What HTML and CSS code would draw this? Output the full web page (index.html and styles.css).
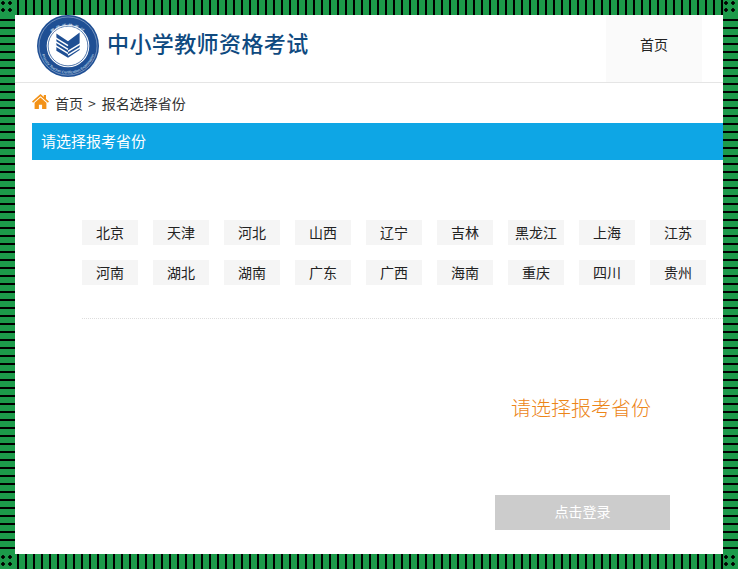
FILE: index.html
```html
<!DOCTYPE html>
<html lang="zh-CN">
<head>
<meta charset="utf-8">
<title>中小学教师资格考试</title>
<link rel="stylesheet" href="styles.css">
</head>
<body>
<div class="frame">
  <div class="corner"></div><div class="edge-h"></div><div class="corner"></div>
  <div class="edge-v"></div>
  <main class="page">
    <header class="header">
      <div class="brand">
        <svg class="logo" width="62" height="62" viewBox="0 0 64 64" aria-hidden="true">
          <circle cx="32" cy="32" r="32" fill="#1f4f94"/>
          <circle cx="32" cy="32" r="30" fill="none" stroke="#c9d6e8" stroke-width=".5"/>
          <circle cx="32" cy="32" r="22" fill="#fff"/>
          <circle cx="32" cy="32" r="20.500" fill="none" stroke="#1f4f94" stroke-width=".8"/>
          <path d="M20 19L32 27 44 18V36L32 44 20 37Z" fill="#1f4f94"/>
          <path d="M19 23.500L32 31.500M19 27.500L32 35.500M19 31.500L32 39.500M45 29.500L32 37.500M45 33.500L32 41.500" fill="none" stroke="#fff" stroke-width="1.500"/>
          <path id="ringtop" d="M8 32a24.500 24.500 0 0 1 48 0" fill="none"/>
          <path id="ringbot" d="M3.500 32a28.500 28.500 0 0 0 57 0" fill="none"/>
          <text class="ring-text"><textPath href="#ringtop" startOffset="50%" text-anchor="middle">教师资格考试</textPath></text>
          <text class="ring-text ring-en"><textPath href="#ringbot" startOffset="50%" text-anchor="middle">Primary Teacher Certification Examination</textPath></text>
        </svg>
        <span class="title">中小学教师资格考试</span>
      </div>
      <nav class="nav"><a class="nav-item">首页</a></nav>
    </header>
    <div class="crumbs">
      <svg class="home" width="17" height="15" viewBox="0 0 17 15" aria-hidden="true">
        <path d="M8.500 0L0 7.600l1.100 1.200L8.500 2.300l7.400 6.500L17 7.600 14 5V1h-2.200v2.100z" fill="#f39217"/>
        <path d="M8.500 3.600L2.600 8.800V15h4.300v-4.300h3.200V15h4.300V8.800z" fill="#f39217"/>
      </svg>
      <span>首页</span><span class="sep">&gt;</span><span>报名选择省份</span>
    </div>
    <h2 class="banner">请选择报考省份</h2>
    <section class="provinces">
      <a class="prov">北京</a><a class="prov">天津</a><a class="prov">河北</a><a class="prov">山西</a><a class="prov">辽宁</a><a class="prov">吉林</a><a class="prov">黑龙江</a><a class="prov">上海</a><a class="prov">江苏</a>
      <a class="prov">河南</a><a class="prov">湖北</a><a class="prov">湖南</a><a class="prov">广东</a><a class="prov">广西</a><a class="prov">海南</a><a class="prov">重庆</a><a class="prov">四川</a><a class="prov">贵州</a>
    </section>
    <div class="rule"></div>
    <p class="hint">请选择报考省份</p>
    <div class="action"><button class="login" type="button">点击登录</button></div>
  </main>
  <div class="edge-v"></div>
  <div class="corner"></div><div class="edge-h"></div><div class="corner"></div>
</div>
</body>
</html>
```
FILE: styles.css
```css
* { box-sizing: border-box; }
html, body { margin: 0; height: 100%; }
body {
  background: #fff;
  font-family: "Liberation Sans", "Noto Sans CJK SC", sans-serif;
  color: #222;
  overflow: hidden;
}
.frame {
  display: grid;
  grid-template-columns: 15px 708px 15px;
  grid-template-rows: 15px 539px 15px;
  width: 738px;
  height: 569px;
}
.corner {
  background: #1c9a4a radial-gradient(circle at 3px 3px, #000 1.500px, transparent 2px) 0 0 / 7px 7px;
}
.edge-h {
  background: repeating-linear-gradient(90deg, #1c9a4a 0 2px, #000 2px 4.500px, #1c9a4a 4.500px 8px);
}
.edge-v {
  background: repeating-linear-gradient(180deg, #1c9a4a 0 4px, #000 4px 6.500px, #1c9a4a 6.500px 8px);
}
.page { overflow: hidden; background: #fff; }
.header {
  display: flex;
  justify-content: space-between;
  height: 68px;
  border-bottom: 1px solid #e5e5e5;
}
.brand { display: flex; align-items: flex-start; padding-left: 22px; gap: 8px; }
.logo { display: block; }
.ring-text { font-family: "Noto Sans CJK SC", sans-serif; font-size: 4.500px; letter-spacing: 1.500px; fill: #dfe8f4; }
.ring-en { font-family: "Liberation Sans", sans-serif; font-size: 3.800px; letter-spacing: 0; }
.title {
  font-family: "Noto Sans CJK SC", sans-serif;
  font-size: 22px;
  line-height: 30px;
  font-weight: 500;
  letter-spacing: .4px;
  color: #0f4a80;
  margin-top: 12px;
}
.nav { display: flex; padding-right: 21px; }
.nav-item {
  display: flex;
  align-items: center;
  justify-content: center;
  width: 96px;
  background: #fafafa;
  font-family: "Noto Sans CJK SC", sans-serif;
  font-size: 14px;
  padding-bottom: 10px;
}
.crumbs {
  display: flex;
  align-items: center;
  gap: 5px;
  height: 40px;
  padding-left: 17px;
  font-family: "Noto Sans CJK SC", sans-serif;
  font-size: 14px;
  color: #333;
}
.home { margin-right: 1px; margin-top: -4px; }
.sep { margin: 0 1px 0 0; }
.banner {
  margin: 0 0 0 17px;
  height: 37px;
  line-height: 36px;
  padding-left: 9px;
  background: #0ea6e5;
  color: #fff;
  font-family: "Noto Sans CJK SC", sans-serif;
  font-size: 15px;
  font-weight: 400;
}
.provinces {
  display: grid;
  grid-template-columns: repeat(9, 56px);
  grid-auto-rows: 25px;
  gap: 15px;
  margin: 60px 0 0 67px;
}
.prov {
  display: flex;
  align-items: center;
  justify-content: center;
  padding-bottom: 2px;
  background: #f5f5f5;
  font-family: "Noto Sans CJK SC", sans-serif;
  font-size: 14px;
  color: #222;
}
.rule {
  margin: 33px 0 0 67px;
  border-top: 1px dotted #ddd;
}
.hint {
  margin: 75px 0 0;
  padding-left: 496px;
  height: 27px;
  line-height: 27px;
  font-family: "Noto Sans CJK SC", sans-serif;
  font-size: 20px;
  font-weight: 300;
  color: #ec8518;
}
.action { padding: 74px 0 0 480px; }
.login {
  display: block;
  width: 175px;
  height: 35px;
  padding: 0 0 3px;
  border: 0;
  background: #ccc;
  color: #fff;
  font-family: "Noto Sans CJK SC", sans-serif;
  font-size: 14px;
}
```
